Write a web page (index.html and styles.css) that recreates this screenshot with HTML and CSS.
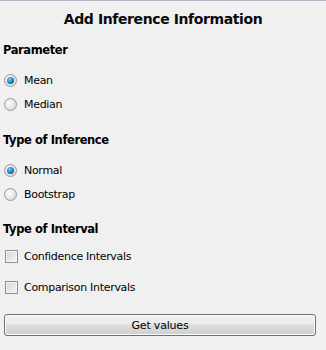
FILE: index.html
```html
<!DOCTYPE html>
<html>
<head>
<meta charset="utf-8">
<link rel="stylesheet" href="styles.css">
</head>
<body>
<div class="panel">
  <div class="title">Add Inference Information</div>
  <div class="heading h1">Parameter</div>
  <div class="opt radio on first"><span class="rb"></span><span>Mean</span></div>
  <div class="opt radio second"><span class="rb"></span><span>Median</span></div>
  <div class="heading h2">Type of Inference</div>
  <div class="opt radio on first"><span class="rb"></span><span>Normal</span></div>
  <div class="opt radio second"><span class="rb"></span><span>Bootstrap</span></div>
  <div class="heading h3">Type of Interval</div>
  <div class="opt check c1"><span class="cb"></span><span>Confidence Intervals</span></div>
  <div class="opt check c2"><span class="cb"></span><span>Comparison Intervals</span></div>
  <div class="btn">Get values</div>
</div>
</body>
</html>
```

FILE: styles.css
```css
html, body {
  margin: 0;
  padding: 0;
  background: #f0f0f0;
}
.panel {
  width: 326px;
  height: 349px;
  border-top: 1px solid #b4b7c6;
  display: flex;
  flex-direction: column;
  font-family: "DejaVu Sans", sans-serif;
  color: #000;
}
.title {
  height: 36px;
  display: flex;
  align-items: center;
  justify-content: center;
  font-weight: bold;
  font-size: 14px;
  letter-spacing: -0.4px;
  color: #0a0a0a;
}
.heading {
  height: 20px;
  display: flex;
  align-items: center;
  padding-left: 3px;
  font-weight: bold;
  font-size: 11.5px;
  letter-spacing: -0.4px;
}
.h1 { margin-top: 3px; }
.h2 { margin-top: 16px; }
.h3 { margin-top: 15px; }
.opt {
  height: 20px;
  display: flex;
  align-items: center;
  font-size: 11px;
  letter-spacing: -0.3px;
  gap: 7px;
  padding-left: 4px;
}
.first { margin-top: 10px; }
.second { margin-top: 4px; }
.c1 { margin-top: 7px; }
.c2 { margin-top: 11px; }
.rb {
  width: 11px;
  height: 11px;
  border-radius: 50%;
  border: 1px solid #9a9a9a;
  background: radial-gradient(circle at 40% 40%, #ffffff 0%, #e6e6e6 50%, #cfcfcf 100%);
  position: relative;
  flex: none;
}
.on .rb::after {
  content: "";
  position: absolute;
  left: 2px;
  top: 2px;
  width: 7px;
  height: 7px;
  border-radius: 50%;
  background: radial-gradient(circle at 40% 35%, #7ad0f5 0%, #1a83c6 50%, #0c3f73 100%);
}
.cb {
  width: 11px;
  height: 11px;
  border: 1px solid #8e8f8f;
  background: linear-gradient(135deg, #d4d4d4 0%, #ececec 70%, #f6f6f6 100%);
  box-shadow: inset 0 0 0 1px #f4f4f4;
  flex: none;
  margin-left: 1px;
}
.c1, .c2 { gap: 6px; }
.btn {
  margin: 17px 0 0 4px;
  width: 310px;
  height: 20px;
  border: 1px solid #707070;
  border-radius: 3px;
  background: linear-gradient(to bottom, #f2f2f2 0%, #ebebeb 45%, #dddddd 50%, #cfcfcf 100%);
  box-shadow: inset 0 0 0 1px #fbfbfb;
  display: flex;
  align-items: center;
  justify-content: center;
  font-size: 11px;
  letter-spacing: -0.2px;
}
```
